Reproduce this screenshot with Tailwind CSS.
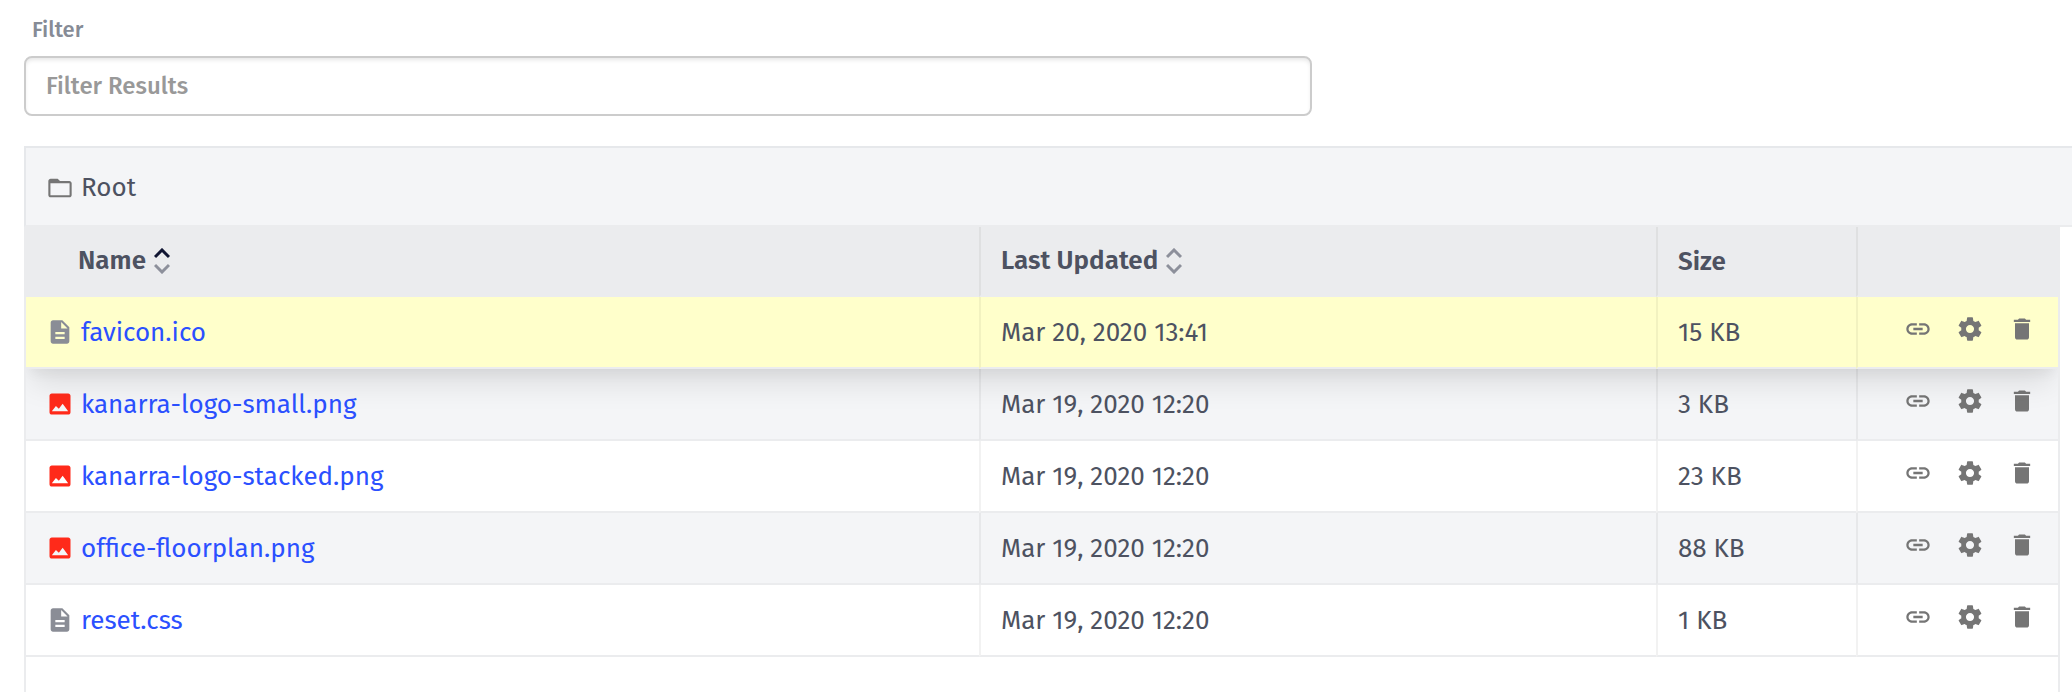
<!DOCTYPE html>
<html lang="en">
<head>
    <meta charset="UTF-8">
    <meta name="viewport" content="width=device-width, initial-scale=1.0">
    <title>File Manager</title>

    <script src="https://cdn.jsdelivr.net/npm/@tailwindcss/browser@4"></script>
</head>
<body class="flex min-h-screen flex-col bg-white pl-6 pt-4 font-['Fira_Sans','Noto_Sans_CJK_SC',sans-serif] text-[26px] leading-8 text-[#4d5261]">

    <!-- icon sprite -->
    <svg class="hidden">
        <symbol id="folder" viewBox="0 0 24 24"><path d="M20 6h-8l-2-2H4c-1.100 0-2 .9-2 2v12c0 1.100.9 2 2 2h16c1.100 0 2-.9 2-2V8c0-1.100-.9-2-2-2zm.2 12.200H3.800V7.900h16.400z"/></symbol>
        <symbol id="file" viewBox="0 0 24 24"><path d="M14 2H6c-1.100 0-2 .9-2 2v16c0 1.100.9 2 2 2h12c1.100 0 2-.9 2-2V8l-6-6zm2 16H8v-2h8v2zm0-4H8v-2h8v2zm-3-5V3.500L18.500 9H13z"/></symbol>
        <symbol id="image" viewBox="0 0 24 24"><path d="M21 19V5c0-1.100-.9-2-2-2H5c-1.100 0-2 .9-2 2v14c0 1.100.9 2 2 2h14c1.100 0 2-.9 2-2zM5 18.200l3.500-4.400 2.500 2.200 3.300-4.300L19 18.200z"/></symbol>
        <symbol id="link" viewBox="0 0 24 24"><path d="M3.900 12c0-1.710 1.390-3.100 3.100-3.100h4V7H7c-2.760 0-5 2.240-5 5s2.240 5 5 5h4v-1.900H7c-1.710 0-3.100-1.390-3.100-3.100zM8 13h8v-2H8v2zm9-6h-4v1.900h4c1.710 0 3.100 1.390 3.100 3.100s-1.390 3.100-3.100 3.100h-4V17h4c2.760 0 5-2.240 5-5s-2.240-5-5-5z"/></symbol>
        <symbol id="gear" viewBox="0 0 24 24"><path d="M19.430 12.980c.04-.32.070-.64.070-.98s-.03-.66-.07-.98l2.110-1.650c.19-.15.24-.42.12-.64l-2-3.460c-.12-.22-.39-.3-.61-.22l-2.490 1c-.52-.4-1.080-.73-1.690-.98l-.38-2.650C14.460 2.180 14.250 2 14 2h-4c-.25 0-.46.180-.49.42l-.38 2.650c-.61.25-1.170.59-1.690.98l-2.490-1c-.23-.09-.49 0-.61.22l-2 3.460c-.13.220-.07.490.12.640l2.110 1.650c-.04.320-.07.650-.07.980s.03.660.070.980l-2.110 1.650c-.19.150-.24.420-.12.640l2 3.460c.12.220.39.300.61.220l2.490-1c.52.400 1.080.730 1.690.980l.38 2.650c.03.240.24.420.49.420h4c.25 0 .46-.18.490-.42l.38-2.650c.61-.25 1.170-.59 1.690-.98l2.490 1c.23.090.49 0 .61-.22l2-3.460c.12-.22.070-.49-.12-.64l-2.110-1.650zM12 15.500c-1.930 0-3.500-1.570-3.500-3.500s1.570-3.500 3.500-3.500 3.500 1.570 3.500 3.500-1.570 3.500-3.500 3.500z"/></symbol>
        <symbol id="trash" viewBox="0 0 24 24"><path d="M6 19c0 1.100.9 2 2 2h8c1.100 0 2-.9 2-2V7H6v12zM19 4h-3.500l-1-1h-5l-1 1H5v2h14V4z"/></symbol>
    </svg>

    <label for="filter" class="pl-2 text-[22px] leading-7 font-medium text-[#868b96]">Filter</label>
    <input
        id="filter"
        type="text"
        placeholder="Filter Results"
        class="mt-3 h-[60px] w-full max-w-[1288px] rounded-lg border-2 border-[#cccccc] px-5 text-[24px] font-medium shadow-[inset_0_3px_4px_-1px_rgba(0,0,0,0.1)] placeholder:text-[#999999]"
    />

    <div class="mt-[30px] flex items-center gap-[7px] border-y-2 border-l-2 border-[#e6e8eb] border-b-[#ebecee] bg-[#f4f5f7] px-5 pt-6 pb-[21px]">
        <svg class="size-7 fill-[#757575]"><use href="#folder"/></svg>
        <span>Root</span>
    </div>

    <main class="mr-3 flex-1 overflow-x-clip border-x-2 border-[#ebecee]">
        <table class="w-full table-fixed border-separate border-spacing-0 text-left">
            <colgroup>
                <col>
                <col class="w-[677px]">
                <col class="w-[200px]">
                <col class="w-[202px]">
            </colgroup>
            <thead class="bg-[#ebecee]">
                <tr class="h-[70px]">
                    <th class="border-b-2 border-b-[#ebecee] pl-[52px] font-semibold" aria-sort="ascending">
                        <button type="button" class="flex items-center gap-2">
                            Name
                            <svg class="h-[26px] w-4 fill-none stroke-[3]" viewBox="0 0 16 26"><path class="stroke-[#111633]" d="M1 9l7-7 7 7"/><path class="stroke-[#8d909b]" d="M1 17l7 7 7-7"/></svg>
                        </button>
                    </th>
                    <th class="border-b-2 border-l-2 border-b-[#ebecee] border-l-black/5 pl-5 font-semibold">
                        <button type="button" class="flex items-center gap-2">
                            Last Updated
                            <svg class="h-[26px] w-4 fill-none stroke-[#8d909b] stroke-[3]" viewBox="0 0 16 26"><path d="M1 9l7-7 7 7"/><path d="M1 17l7 7 7-7"/></svg>
                        </button>
                    </th>
                    <th class="border-b-2 border-l-2 border-b-[#ebecee] border-l-black/5 pt-0.5 pl-5 font-semibold">Size</th>
                    <th class="border-b-2 border-l-2 border-b-[#ebecee] border-l-black/5" aria-label="Actions"></th>
                </tr>
            </thead>
            <tbody id="files"></tbody>
        </table>
    </main>

    <script>
        const files = [
            { name: 'favicon.ico', updated: 'Mar 20, 2020 13:41', size: '15 KB', icon: 'file', active: true },
            { name: 'kanarra-logo-small.png', updated: 'Mar 19, 2020 12:20', size: '3 KB', icon: 'image' },
            { name: 'kanarra-logo-stacked.png', updated: 'Mar 19, 2020 12:20', size: '23 KB', icon: 'image' },
            { name: 'office-floorplan.png', updated: 'Mar 19, 2020 12:20', size: '88 KB', icon: 'image' },
            { name: 'reset.css', updated: 'Mar 19, 2020 12:20', size: '1 KB', icon: 'file' }
        ];

        const activeRow = 'relative z-10 h-[72px] bg-[#ffffcb] shadow-[0_20px_30px_-6px_rgba(0,0,0,0.1),0_8px_12px_-4px_rgba(0,0,0,0.05)]';
        const plainRow = 'h-[72px] even:bg-[#f4f5f7]';

        document.getElementById('files').innerHTML = files.map((file) => `
            <tr class="${file.active ? activeRow : plainRow}">
                <td class="border-b-2 border-[#ebecee] pl-5">
                    <div class="flex items-center gap-[7px]">
                        <svg class="size-7 ${file.icon === 'image' ? 'fill-[#ff2a1a]' : 'fill-[#8a8d96]'}"><use href="#${file.icon}"/></svg>
                        <a href="#" class="pt-0.5 text-[#2b50ff]">${file.name}</a>
                    </div>
                </td>
                <td class="border-b-2 border-l-2 border-b-[#ebecee] border-l-black/5 pt-0.5 pl-5">${file.updated}</td>
                <td class="border-b-2 border-l-2 border-b-[#ebecee] border-l-black/5 pt-0.5 pl-5">${file.size}</td>
                <td class="border-b-2 border-l-2 border-b-[#ebecee] border-l-black/5 pr-[22px] pb-1.5">
                    <div class="flex justify-end gap-6">
                        <button type="button" aria-label="Copy link"><svg class="size-7 fill-[#757575]"><use href="#link"/></svg></button>
                        <button type="button" aria-label="Settings"><svg class="size-7 fill-[#757575]"><use href="#gear"/></svg></button>
                        <button type="button" aria-label="Delete"><svg class="size-7 fill-[#757575]"><use href="#trash"/></svg></button>
                    </div>
                </td>
            </tr>`).join('');
    </script>

</body>
</html>
